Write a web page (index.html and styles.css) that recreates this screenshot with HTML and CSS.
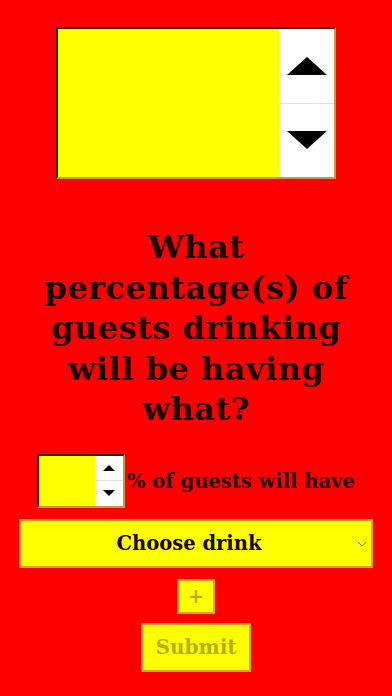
FILE: index.html
```html
<!DOCTYPE html>
<html lang="en">
<head>
  <meta charset="UTF-8" />
  <meta name="viewport" content="width=device-width, initial-scale=1.0" />
  <title>Drinks Planner</title>
  <link rel="stylesheet" href="styles.css">
</head>
<body>
  <div class="page">
    <div class="stepper big">
      <input type="text" class="step-input" value="">
      <div class="spin">
        <button class="spin-btn"><span class="tri up"></span></button>
        <button class="spin-btn"><span class="tri down"></span></button>
      </div>
    </div>

    <h1 class="question">What percentage(s) of guests drinking will be having what?</h1>

    <div class="share-row">
      <div class="stepper small">
        <input type="text" class="step-input" value="">
        <div class="spin">
          <button class="spin-btn"><span class="tri up"></span></button>
          <button class="spin-btn"><span class="tri down"></span></button>
        </div>
      </div>
      <span class="share-label">% of guests will have</span>
    </div>

    <div class="drink-select">
      <span>Choose drink</span>
      <svg class="chevron" width="10" height="6" viewBox="0 0 10 6"><path d="M1 1 L5 5 L9 1" fill="none" stroke="#8a7a00" stroke-width="1"/></svg>
    </div>

    <button class="add-btn" disabled>+</button>
    <button class="submit-btn" disabled>Submit</button>
  </div>
</body>
</html>
```

FILE: styles.css
```css
body {
  margin: 0;
  background: #ff0000;
  font-family: "DejaVu Serif", "Liberation Serif", serif;
  color: #1c0000;
}
.page {
  display: flex;
  flex-direction: column;
  align-items: center;
  padding-top: 27px;
}
.stepper {
  display: flex;
  box-sizing: border-box;
  border: 2px solid;
  border-color: #3a1600 #c49a3a #c49a3a #3a1600;
  background: #ffff00;
}
.step-input {
  flex: 1;
  min-width: 0;
  border: none;
  background: #ffff00;
  padding: 0;
  outline: none;
}
.spin {
  display: flex;
  flex-direction: column;
  background: #fff;
}
.spin-btn {
  flex: 1;
  border: none;
  background: #fff;
  padding: 0;
  display: flex;
  align-items: center;
  justify-content: center;
}
.spin-btn + .spin-btn {
  border-top: 1px solid #e2e2e2;
}
.tri {
  width: 0;
  height: 0;
  border-style: solid;
  border-color: transparent;
}
.big {
  width: 280px;
  height: 152px;
}
.big .spin {
  width: 55px;
}
.big .tri.up {
  border-width: 0 20px 18px 20px;
  border-bottom-color: #000;
}
.big .tri.down {
  border-width: 18px 20px 0 20px;
  border-top-color: #000;
}
.question {
  margin: 48px 0 0;
  width: 336px;
  text-align: center;
  font-size: 32px;
  letter-spacing: 0.5px;
  line-height: 40.5px;
  font-weight: bold;
}
.share-row {
  display: flex;
  align-items: center;
  margin-top: 24px;
  align-self: flex-start;
  margin-left: 37px;
}
.small {
  width: 88px;
  height: 54px;
}
.small .spin {
  width: 28px;
}
.small .tri.up {
  border-width: 0 6px 6px 6px;
  border-bottom-color: #000;
}
.small .tri.down {
  border-width: 6px 6px 0 6px;
  border-top-color: #000;
}
.share-label {
  font-size: 19.5px;
  font-weight: bold;
  margin-left: 2px;
  padding-top: 2px;
}
.drink-select {
  position: relative;
  box-sizing: border-box;
  width: 354px;
  height: 49px;
  margin-top: 11px;
  padding-right: 14px;
  background: #ffff00;
  border: 2px solid #e0a020;
  display: flex;
  align-items: center;
  justify-content: center;
  font-size: 19.5px;
  font-weight: bold;
}
.chevron {
  position: absolute;
  right: 4px;
  top: 20px;
}
.add-btn,
.submit-btn {
  box-sizing: border-box;
  background: #ffff00;
  border: 2px solid #e0a020;
  color: #b4b000;
  font-family: inherit;
  font-weight: bold;
  padding: 0;
}
.add-btn {
  width: 38px;
  height: 35px;
  margin-top: 11px;
  font-size: 20px;
}
.submit-btn {
  width: 110px;
  height: 49px;
  margin-top: 9px;
  font-size: 20px;
}
```
